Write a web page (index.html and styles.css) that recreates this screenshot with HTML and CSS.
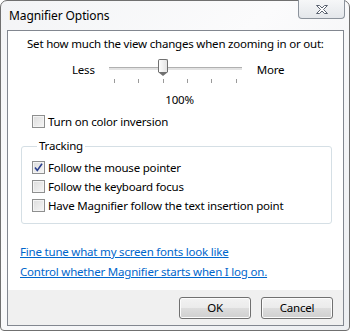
FILE: index.html
```html
<!DOCTYPE html>
<html lang="en">
<head>
  <meta charset="UTF-8">
  <title>Magnifier Options</title>
  <link rel="stylesheet" href="styles.css">
</head>
<body>

<div class="window">
  <div class="titlebar">
    <span class="title">Magnifier Options</span>
    <div class="close">
      <svg width="14" height="11" viewBox="0 0 14 11">
        <path d="M1.5 1.5 L4.5 1.5 L7 4 L9.5 1.5 L12.5 1.5 L8.5 5.5 L12.5 9.5 L9.5 9.5 L7 7 L4.5 9.5 L1.5 9.5 L5.5 5.5 Z" fill="#fff" stroke="#5a6270" stroke-width="1" stroke-linejoin="round"/>
      </svg>
    </div>
  </div>

  <div class="client">
    <div class="content">
      <p class="prompt">Set how much the view changes when zooming in or out:</p>

      <div class="slider-row">
        <span>Less</span>
        <div class="slider">
          <div class="track"></div>
          <div class="thumb"></div>
          <div class="ticks">
            <i></i><i></i><i></i><i></i><i></i><i></i>
          </div>
        </div>
        <span>More</span>
      </div>
      <div class="percent">100%</div>

      <div class="check inversion"><span class="box"></span>Turn on color inversion</div>

      <fieldset class="group">
        <legend>Tracking</legend>
        <div class="check"><span class="box checked">
          <svg width="9" height="9" viewBox="0 0 9 9"><path d="M1 4.5 L3.3 7.5 L8 0.8" fill="none" stroke="#2a3f8f" stroke-width="1.6"/></svg>
        </span>Follow the mouse pointer</div>
        <div class="check"><span class="box"></span>Follow the keyboard focus</div>
        <div class="check"><span class="box"></span>Have Magnifier follow the text insertion point</div>
      </fieldset>

      <div class="links">
        <a href="#">Fine tune what my screen fonts look like</a>
        <a href="#">Control whether Magnifier starts when I log on.</a>
      </div>
    </div>

    <div class="footer">
      <button class="btn">OK</button>
      <button class="btn">Cancel</button>
    </div>
  </div>
</div>

</body>
</html>
```

FILE: styles.css
```css
html, body {
  margin: 0;
  background: #fff;
}

body {
  font-family: "Noto Sans", sans-serif;
  font-size: 11.5px;
  letter-spacing: -0.2px;
  line-height: 16px;
  color: #000;
}

.window {
  width: 348px;
  height: 329px;
  border: 1px solid #707070;
  border-radius: 7px 7px 4px 4px;
  background: linear-gradient(to bottom right, #f3f4f6, #fbfbfc 40%, #eceef1);
  display: flex;
  flex-direction: column;
}

.titlebar {
  height: 29px;
  display: flex;
  align-items: flex-start;
  justify-content: space-between;
}

.title {
  padding: 7px 0 0 8px;
  font-size: 12px;
  letter-spacing: -0.1px;
}

.close {
  width: 45px;
  height: 18px;
  margin: -1px 4px 0 0;
  border: 1px solid #8c939c;
  border-top: none;
  border-radius: 0 0 4px 4px;
  background: linear-gradient(#f6f7f8, #e4e7eb);
  display: flex;
  align-items: center;
  justify-content: center;
}

.client {
  flex: 1;
  margin: 0 5px 4px 6px;
  border: 1px solid #828790;
  background: #fff;
  display: flex;
  flex-direction: column;
}

.content {
  flex: 1;
  padding: 0 12px;
}

.prompt {
  margin: 5px 0 0 7px;
}

.slider-row {
  display: flex;
  align-items: center;
  margin-top: 6px;
  padding-left: 52px;
}

.slider {
  position: relative;
  width: 133px;
  height: 24px;
  margin: 0 15px 0 14px;
}

.track {
  position: absolute;
  left: 0;
  right: 0;
  top: 9px;
  height: 2px;
  background: #e3e3e3;
  border-top: 1px solid #b0b0b0;
  border-bottom: 1px solid #fff;
}

.thumb {
  position: absolute;
  left: 49px;
  top: 1px;
  width: 8px;
  height: 12px;
  border: 1px solid #707070;
  border-bottom: none;
  border-radius: 2px 2px 0 0;
  background: linear-gradient(to right, #fdfdfd, #e4e4e4);
}

.thumb::after {
  content: "";
  position: absolute;
  left: -1px;
  top: 12px;
  width: 0;
  height: 0;
  border-left: 5px solid transparent;
  border-right: 5px solid transparent;
  border-top: 4px solid #707070;
}

.ticks {
  position: absolute;
  left: 5px;
  right: 5px;
  top: 21px;
  display: flex;
  justify-content: space-between;
}

.ticks i {
  width: 1px;
  height: 4px;
  background: #9a9a9a;
}

.percent {
  text-align: center;
  margin-top: 10px;
  padding-left: 8px;
}

.check {
  display: flex;
  align-items: center;
  height: 19px;
}

.inversion {
  margin: 4px 0 0 12px;
}

.box {
  width: 11px;
  height: 11px;
  border: 1px solid #8e8f8f;
  background: linear-gradient(135deg, #dcdcdc, #f6f6f6);
  box-shadow: inset 0 0 0 1px #f4f4f4;
  margin-right: 3px;
  display: flex;
  align-items: center;
  justify-content: center;
}

.group {
  margin: 7px 0 0 1px;
  padding: 4px 0 8px 10px;
  border: 1px solid #d5dfe5;
  border-radius: 3px;
  width: 299px;
}

.group legend {
  padding: 0 2px;
  margin-left: 5px;
}

.links {
  display: flex;
  flex-direction: column;
  align-items: flex-start;
  gap: 4px;
  margin: 20px 0 0 0;
}

.links a {
  color: #0066cc;
  text-decoration: underline;
}

.footer {
  height: 35px;
  background: #f0f0f0;
  display: flex;
  justify-content: flex-end;
  align-items: center;
  gap: 10px;
  padding-right: 10px;
}

.btn {
  width: 72px;
  height: 22px;
  font-family: inherit;
  font-size: 11.5px;
  letter-spacing: -0.2px;
  color: #000;
  border: 1px solid #707070;
  border-radius: 3px;
  background: linear-gradient(#f2f2f2 0%, #ebebeb 50%, #dddddd 51%, #cfcfcf 100%);
  box-shadow: inset 0 0 0 1px #fcfcfc;
  padding: 0;
}
```
